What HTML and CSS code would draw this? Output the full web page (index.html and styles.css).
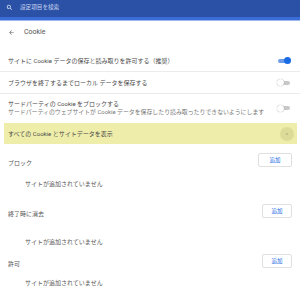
FILE: index.html
```html
<!DOCTYPE html>
<html lang="ja">
<head>
  <meta charset="UTF-8" />
  <title>Cookie</title>
  <link rel="stylesheet" href="styles.css">
</head>
<body>

  <!-- 検索バー -->
  <header class="topbar">
    <svg class="search-icon" width="7" height="7" viewBox="0 0 24 24">
      <path fill="#e8eefb" d="M15.5 14h-.8l-.3-.3A6.5 6.5 0 1 0 9.5 16a6.5 6.5 0 0 0 4.2-1.6l.3.3v.8l5 5 1.5-1.5-5-5zm-6 0a4.5 4.5 0 1 1 0-9 4.5 4.5 0 0 1 0 9z"/>
    </svg>
    <span class="search-text">設定項目を検索</span>
  </header>

  <main class="page">
    <div class="page-title">
      <svg class="back-icon" width="7" height="7" viewBox="0 0 24 24">
        <path fill="#5f6368" d="M20 11H7.8l5.6-5.6L12 4l-8 8 8 8 1.4-1.4L7.8 13H20v-2z"/>
      </svg>
      <span>Cookie</span>
    </div>

    <!-- トグル項目 -->
    <div class="toggle-list">
      <div class="row">
        <span class="row-label">サイトに Cookie データの保存と読み取りを許可する（推奨）</span>
        <span class="toggle on"></span>
      </div>
      <div class="row">
        <span class="row-label">ブラウザを終了するまでローカル データを保存する</span>
        <span class="toggle"></span>
      </div>
      <div class="row row-tall">
        <div>
          <div class="row-label">サードパーティの Cookie をブロックする</div>
          <div class="row-sub">サードパーティのウェブサイトが Cookie データを保存したり読み取ったりできないようにします</div>
        </div>
        <span class="toggle"></span>
      </div>
    </div>

    <div class="row-link">
      <span>すべての Cookie とサイトデータを表示</span>
      <span class="arrow-btn">
        <svg width="4" height="4" viewBox="0 0 24 24"><path fill="#5f6368" d="M8.6 16.6 13.2 12 8.6 7.4 10 6l6 6-6 6z"/></svg>
      </span>
    </div>

    <!-- サイトリスト -->
    <section class="section section-block">
      <div class="section-head">
        <span class="section-label">ブロック</span>
        <button class="add-btn">追加</button>
      </div>
      <div class="empty">サイトが追加されていません</div>
    </section>

    <section class="section section-clear">
      <div class="section-head">
        <span class="section-label">終了時に消去</span>
        <button class="add-btn">追加</button>
      </div>
      <div class="empty">サイトが追加されていません</div>
    </section>

    <section class="section section-allow">
      <div class="section-head">
        <span class="section-label">許可</span>
        <button class="add-btn">追加</button>
      </div>
      <div class="empty">サイトが追加されていません</div>
    </section>
  </main>

</body>
</html>
```

FILE: styles.css
```css
/* ================================
   Variables
================================= */
:root {
  --blue-dark: #2a51a6;
  --blue-stripe: #3a6dd6;
  --blue: #1a6ae3;
  --text: #4a4a4a;
  --text-muted: #777;
  --divider: #ececec;
  --font: Roboto, "Noto Sans CJK JP", sans-serif;
}

* {
  margin: 0;
  padding: 0;
  box-sizing: border-box;
}

body {
  font-family: var(--font);
  background: #fff;
  color: var(--text);
  width: 300px;
  height: 296px;
  overflow: hidden;
}

/* ================================
   Top bar
================================= */
.topbar {
  height: 20px;
  background: var(--blue-dark);
  border-bottom: 3px solid var(--blue-stripe);
  box-shadow: 0 1px 0 #9db8ee;
  display: flex;
  align-items: center;
  padding: 0 6px 3px;
  gap: 7px;
}

.search-icon {
  display: block;
}

.search-text {
  font-size: 5.6px;
  line-height: 7px;
  color: #c9d5f1;
}

/* ================================
   Title
================================= */
.page-title {
  height: 24px;
  display: flex;
  align-items: center;
  gap: 9px;
  padding-left: 8px;
  font-size: 7px;
  color: #555;
}

.back-icon {
  display: block;
}

/* ================================
   Toggle rows
================================= */
.toggle-list {
  margin-top: 6px;
}

.row {
  height: 22px;
  display: flex;
  align-items: center;
  justify-content: space-between;
  padding: 0 10px 0 8px;
  border-bottom: 1px solid var(--divider);
  font-size: 6px;
  line-height: 9px;
}

.row-tall {
  height: 28px;
  border-bottom: none;
}

.row-label {
  white-space: nowrap;
}

.row-sub {
  color: var(--text-muted);
  white-space: nowrap;
  font-size: 5.9px;
}

.toggle {
  position: relative;
  width: 12px;
  height: 4px;
  border-radius: 2px;
  background: #c8c8c8;
  flex-shrink: 0;
}

.toggle::after {
  content: "";
  position: absolute;
  top: -1.5px;
  left: -1px;
  width: 7px;
  height: 7px;
  border-radius: 50%;
  background: #fff;
  box-shadow: 0 0 1px rgba(0,0,0,0.45);
}

.toggle.on {
  background: #6c9bea;
}

.toggle.on::after {
  left: 6px;
  background: var(--blue);
  box-shadow: none;
}

/* ================================
   Highlighted link row
================================= */
.row-link {
  margin: 1px 3px 0 4px;
  height: 21px;
  background: #eeedaa;
  display: flex;
  align-items: center;
  justify-content: space-between;
  padding: 0 3px 0 4px;
  font-size: 6px;
  line-height: 9px;
}

.arrow-btn {
  width: 14px;
  height: 14px;
  border-radius: 50%;
  background: #dcdb97;
  display: flex;
  align-items: center;
  justify-content: center;
}

.arrow-btn svg {
  display: block;
}

/* ================================
   Site lists
================================= */
.section-head {
  display: flex;
  justify-content: space-between;
  align-items: flex-end;
  padding: 0 8px;
}

.section-label {
  font-size: 6px;
  line-height: 8px;
  color: #555;
}

.add-btn {
  width: 34px;
  height: 14px;
  background: #fff;
  border: 1px solid #e0e0e0;
  border-radius: 2px;
  font-family: var(--font);
  font-size: 5.5px;
  color: var(--blue);
}

.section-clear .add-btn,
.section-allow .add-btn {
  width: 30px;
}

.empty {
  padding-left: 25px;
  font-size: 6px;
  line-height: 8px;
  color: #5a5a5a;
}

.section-block { margin-top: 9px; }
.section-block .empty { margin-top: 13px; }

.section-clear { margin-top: 16px; }
.section-clear .empty { margin-top: 20px; }

.section-allow { margin-top: 8px; }
.section-allow .empty { margin-top: 11px; }
```
